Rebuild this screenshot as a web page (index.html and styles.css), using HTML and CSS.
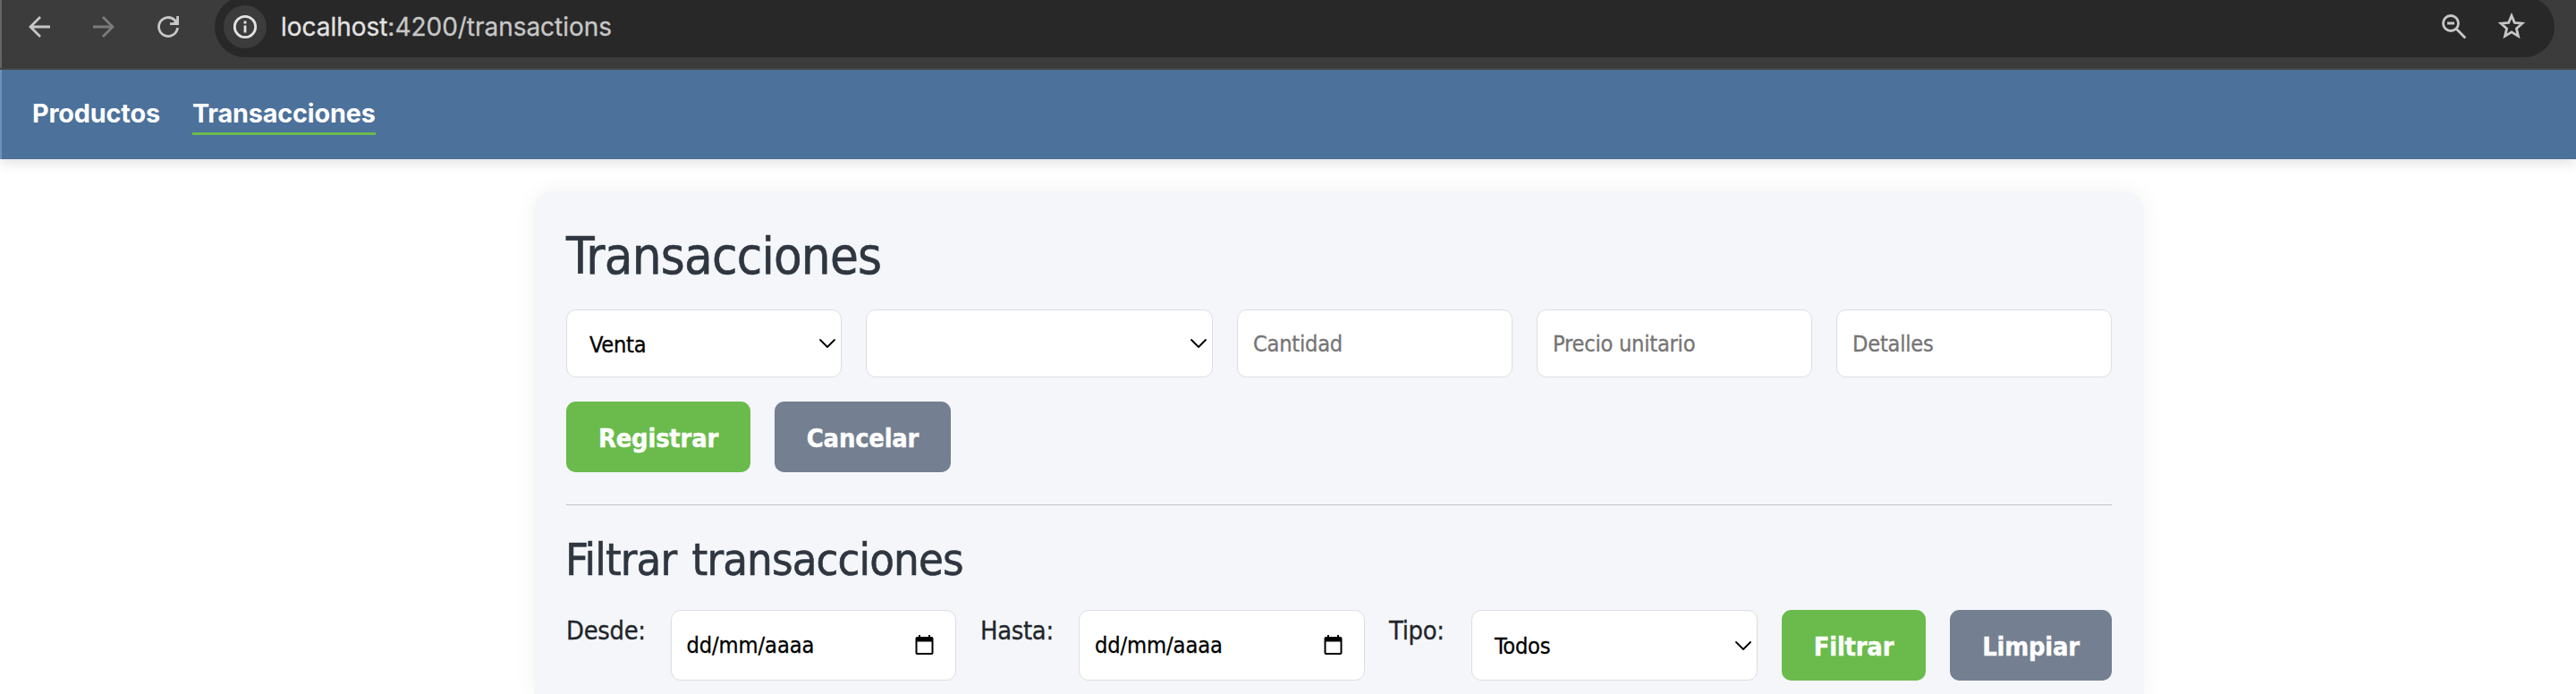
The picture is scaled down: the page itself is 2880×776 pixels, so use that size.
FILE: index.html
```
<!DOCTYPE html>
<html lang="es">
<head>
<meta charset="utf-8">
<title>Transacciones</title>
<link rel="stylesheet" href="styles.css">
</head>
<body>
<header class="toolbar">
  <svg class="tool" width="28" height="28" viewBox="0 0 28 28"><path d="M26 14H4M15 3 4 14 15 25"/></svg>
  <svg class="tool dim" width="28" height="28" viewBox="0 0 28 28"><path d="M2 14h22M13 3l11 11-11 11"/></svg>
  <svg class="tool" width="28" height="28" viewBox="0 0 28 28"><path d="M24.500 15.200A10.500 10.500 0 1 1 21.600 6.700L24 9.500M24.600 2v8.600h-8.600"/><path class="solid" d="M18.500 10.500 24.500 4.500v6z"/></svg>
  <div class="omnibox">
    <span class="site"><svg width="28" height="28" viewBox="0 0 28 28"><circle cx="14" cy="14" r="11.700"/><path d="M14 12.500v8M14 7.500v3"/></svg></span>
    <span class="url"><span class="host">localhost</span>:4200/transactions</span>
    <span class="actions">
      <svg width="30" height="30" viewBox="0 0 30 30"><circle cx="12" cy="11" r="8.500"/><path d="M8 11h8M18 17l10.300 10.600"/></svg>
      <svg class="star" width="32" height="30" viewBox="0 0 32 30"><path d="M16 3.500l3.300 7.900 8.600.8-6.500 5.700 2 8.500-7.400-4.500-7.400 4.500 2-8.500-6.500-5.700 8.600-.8z"/></svg>
    </span>
  </div>
</header>
<nav class="nav">
  <a class="link">Productos</a>
  <a class="link active">Transacciones</a>
</nav>
<main class="card">
  <h1 class="title">Transacciones</h1>
  <form class="row entry">
    <div class="field select">Venta<svg class="chevron" width="20" height="12" viewBox="0 0 20 12"><path d="M2 2l8 8 8-8"/></svg></div>
    <div class="field select"><svg class="chevron" width="20" height="12" viewBox="0 0 20 12"><path d="M2 2l8 8 8-8"/></svg></div>
    <input class="field" placeholder="Cantidad">
    <input class="field" placeholder="Precio unitario">
    <input class="field" placeholder="Detalles">
  </form>
  <div class="row actions-row">
    <button class="btn primary">Registrar</button>
    <button class="btn secondary cancel">Cancelar</button>
  </div>
  <hr class="divider">
  <h2 class="subtitle">Filtrar transacciones</h2>
  <div class="row filters">
    <label class="label">Desde:</label>
    <div class="field date">dd/mm/aaaa<svg class="calendar" width="21" height="22" viewBox="0 0 21 22"><path d="M2.500 2H4V0h2v2h9V0h2v2h1.500a2 2 0 0 1 2 2v16a2 2 0 0 1-2 2h-16a2 2 0 0 1-2-2V4a2 2 0 0 1 2-2zM2.500 7.500V20h16V7.500z"/></svg></div>
    <label class="label">Hasta:</label>
    <div class="field date">dd/mm/aaaa<svg class="calendar" width="21" height="22" viewBox="0 0 21 22"><path d="M2.500 2H4V0h2v2h9V0h2v2h1.500a2 2 0 0 1 2 2v16a2 2 0 0 1-2 2h-16a2 2 0 0 1-2-2V4a2 2 0 0 1 2-2zM2.500 7.500V20h16V7.500z"/></svg></div>
    <label class="label">Tipo:</label>
    <div class="field select">Todos<svg class="chevron" width="20" height="12" viewBox="0 0 20 12"><path d="M2 2l8 8 8-8"/></svg></div>
    <button class="btn primary">Filtrar</button>
    <button class="btn secondary">Limpiar</button>
  </div>
</main>
</body>
</html>
```
FILE: styles.css
```
* { box-sizing: border-box; }
body {
  margin: 0;
  background: #fff;
  font-family: "DejaVu Sans Condensed", "DejaVu Sans", sans-serif;
}
svg { display: block; flex: none; fill: none; stroke: #c7c7c7; stroke-width: 2.8; }

.toolbar {
  display: flex;
  align-items: flex-start;
  height: 78px;
  padding: 0 24px 0 30px;
  background: #3c3c3c;
  border-bottom: 2px solid #464744;
  box-shadow: inset 2px 0 #666;
}
.tool { margin: 16px 44px 0 0; }
.tool:nth-child(3) { margin-right: 38px; }
.dim { stroke: #7b7b7b; }
.solid { fill: #c7c7c7; stroke: none; }
.omnibox {
  display: flex;
  flex: 1;
  align-items: center;
  height: 68px;
  margin-top: -4px;
  padding: 0 32px 0 10px;
  border-radius: 34px;
  background: #282828;
}
.site {
  display: flex;
  align-items: center;
  justify-content: center;
  width: 48px;
  height: 48px;
  border-radius: 50%;
  background: #3c3c3c;
}
.site svg { stroke: #e3e3e3; }
.url {
  margin-left: 16px;
  color: #c7c7c7;
  font: 28px/34px Inter, sans-serif;
  letter-spacing: -0.03px;
  -webkit-text-stroke: 0.3px;
}
.host { color: #e3e3e3; }
.actions { display: flex; gap: 34px; margin-left: auto; }
.star { margin-top: -1px; }

.nav {
  display: flex;
  align-items: flex-start;
  gap: 36px;
  position: relative;
  height: 100px;
  padding: 31px 36px 0 36px;
  background: #4c719b;
  box-shadow: inset 2px 0 #7190b3, 0 4px 14px rgba(0, 0, 0, 0.12);
}
.link {
  padding-bottom: 4px;
  border-bottom: 3px solid transparent;
  color: #fff;
  font: 700 28.8px/35px Inter, sans-serif;
  letter-spacing: -0.17px;
}
.active { border-color: #6abb4b; }

.card {
  width: 1800px;
  height: 562px;
  margin: 36px 0 0 597px;
  padding: 44px 36px 0;
  border-radius: 21.6px 21.6px 0 0;
  background: #f4f6fa;
  box-shadow: 0 0 26px rgba(0, 0, 0, 0.055);
  clip-path: inset(-36px -36px 0);
}
.title, .subtitle { color: #2f3640; font-weight: 400; -webkit-text-stroke: 0.6px; }
.title { margin: 0 0 30px; font-size: 57.6px; line-height: 58px; letter-spacing: -0.8px; }
.subtitle { margin: 0 0 31px -1px; font-size: 50.4px; line-height: 50px; letter-spacing: -0.9px; word-spacing: 4px; }
.row { display: flex; gap: 27px; margin: 0; }
.entry { display: grid; grid-template-columns: 308px 388px 308px 308px 308px; }
.field {
  display: flex;
  align-items: center;
  justify-content: space-between;
  width: 100%;
  height: 76px;
  padding: 0 17px;
  border: 1px solid #dcdde1;
  border-radius: 10.8px;
  background: #fff;
  color: #000;
  font-family: inherit;
  font-size: 25.2px;
  letter-spacing: -0.25px;
  -webkit-text-stroke: 0.3px;
}
.field::placeholder { color: #757575; opacity: 1; }
.select { padding: 2px 6px 0 25px; }
.chevron { margin: -2px -1px 0 auto; stroke: #000; stroke-width: 1.8; stroke-linecap: round; stroke-linejoin: round; }
.actions-row { margin-top: 27px; }
.btn {
  flex: none;
  width: 206px;
  height: 79px;
  padding: 3px 0 0;
  border: 0;
  border-radius: 10.8px;
  color: #fff;
  font: bold 28.8px "DejaVu Sans Condensed", "DejaVu Sans", sans-serif;
  letter-spacing: -0.2px;
  -webkit-text-stroke: 0.4px;
}
.primary { background: #6abb4b; }
.secondary { background: #747f91; }
.cancel { width: 197px; }
.divider { height: 1px; margin: 36px 0; border: 0; background: #bfc1c5; }

.filters {
  display: grid;
  grid-template-columns: 89.5px 319.5px 83px 320px 65px 320px 161px 181px;
}
.filters .field { height: 79px; }
.filters .btn { width: 100%; }
.label {
  padding-top: 1.5px;
  color: #212529;
  font-size: 28.8px;
  line-height: 43.2px;
  letter-spacing: -0.3px;
  -webkit-text-stroke: 0.3px;
}
.date { padding: 0 24px 0 17px; letter-spacing: -0.1px; }
.calendar { margin-top: -1px; fill: #000; stroke: none; fill-rule: evenodd; }
```
